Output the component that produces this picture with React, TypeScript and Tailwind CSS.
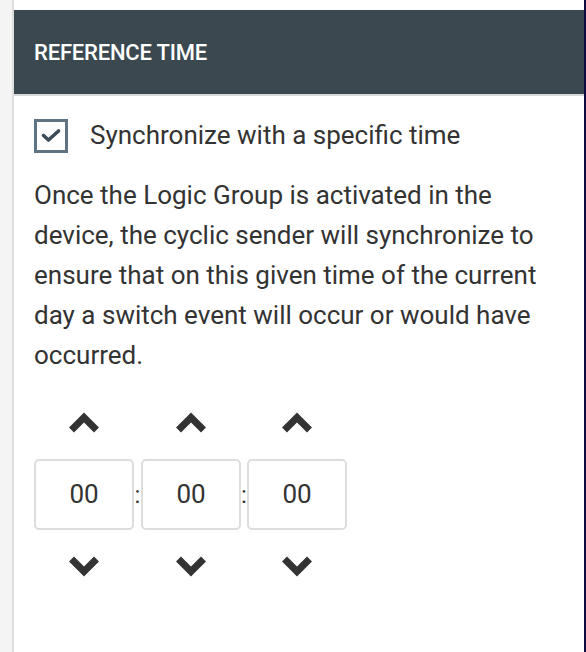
const Chevron = ({ down = false }: { down?: boolean }) => (
  <button className="flex h-[21px] w-[32px] items-center justify-center">
    <svg width="32" height="21" viewBox="0 0 32 21" className={down ? "rotate-180" : ""}>
      <path d="M3.5 18 L16 5.5 L28.5 18" fill="none" stroke="#333333" strokeWidth="7" strokeLinejoin="miter" />
    </svg>
  </button>
);

const TimeBox = ({ value }: { value: string }) => (
  <div className="flex h-[71px] w-[100px] items-center justify-center rounded-[5px] border-2 border-[#dddddd] text-[26px] text-[#333333]">
    {value}
  </div>
);

const Colon = () => (
  <div className="flex h-[71px] items-center justify-center text-[24px] leading-none text-[#333333]">:</div>
);

export default function App() {
  return (
    <div className="flex min-h-[652px] bg-[#f4f4f4] font-['Roboto',sans-serif]">
      <div className="ml-3 flex-1 border-l-2 border-r-2 border-l-[#dedede] border-r-[#0d0b40] bg-white pt-[10px]">
        <div className="flex h-[86px] items-center border-b-2 border-[#d8d8d8] bg-[#3c4850] px-5">
          <span className="text-[22px] font-medium tracking-[-0.2px] text-white">REFERENCE TIME</span>
        </div>

        <div className="px-5">
          <div className="mt-[20px] flex items-center gap-[22px]">
            <div className="flex h-[34px] w-[34px] items-center justify-center border-[3px] border-[#5f7482]">
              <svg width="22" height="16" viewBox="0 0 22 16">
                <path d="M3.5 7.5 L8.5 12 L18.5 3" fill="none" stroke="#3c4d59" strokeWidth="3.6" strokeLinecap="round" strokeLinejoin="round" />
              </svg>
            </div>
            <span className="text-[26px] text-[#333333]">Synchronize with a specific time</span>
          </div>

          <p className="mt-[20px] text-[26px] leading-[40px] text-[#333333]">
            Once the Logic Group is activated in the device, the cyclic sender will synchronize to ensure that on this
            given time of the current day a switch event will occur or would have occurred.
          </p>

          <div className="mt-[37px] grid grid-cols-[100px_7px_100px_6px_100px] items-center">
            <div className="flex justify-center"><Chevron /></div>
            <div />
            <div className="flex justify-center"><Chevron /></div>
            <div />
            <div className="flex justify-center"><Chevron /></div>

            <div className="mt-[26px]"><TimeBox value="00" /></div>
            <div className="mt-[26px]"><Colon /></div>
            <div className="mt-[26px]"><TimeBox value="00" /></div>
            <div className="mt-[26px]"><Colon /></div>
            <div className="mt-[26px]"><TimeBox value="00" /></div>

            <div className="mt-[26px] flex justify-center"><Chevron down /></div>
            <div />
            <div className="mt-[26px] flex justify-center"><Chevron down /></div>
            <div />
            <div className="mt-[26px] flex justify-center"><Chevron down /></div>
          </div>
        </div>
      </div>
    </div>
  );
}
